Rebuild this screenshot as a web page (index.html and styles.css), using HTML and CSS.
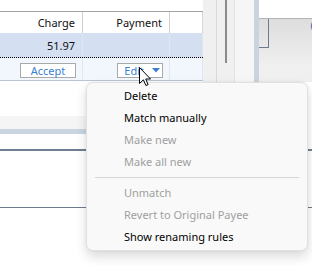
FILE: index.html
```html
<!DOCTYPE html>
<html lang="en">
<head>
    <meta charset="UTF-8">
    <meta name="viewport" content="width=device-width, initial-scale=1.0">
    <title>Register - match menu</title>
    <link rel="stylesheet" href="styles.css">
</head>
<body>
    <div class="screen">
        <div class="top">
            <div class="register">
                <div class="spacer"></div>
                <div class="grid head">
                    <div class="cell">Charge</div>
                    <div class="cell">Payment</div>
                    <div class="cell"></div>
                </div>
                <div class="grid row selected">
                    <div class="cell">51.97</div>
                    <div class="cell"></div>
                    <div class="cell"></div>
                </div>
                <div class="grid row actions">
                    <div class="cell"><span class="btn">Accept</span></div>
                    <div class="cell">
                        <span class="btn edit">Edit
                            <svg class="caret" width="8" height="5" viewBox="0 0 8 5"><path d="M0 0H8L4 4.5Z" fill="#3b7fd2"/></svg>
                        </span>
                    </div>
                    <div class="cell"></div>
                </div>
            </div>
            <div class="strip s1"></div>
            <div class="strip s2"><div class="grip"></div></div>
            <div class="strip s3"></div>
            <div class="splitter"></div>
            <div class="pane">
                <div class="pane-head"></div>
                <div class="pane-body">
                    <div class="corner"></div>
                    <span class="glyph">C</span>
                </div>
            </div>
        </div>

        <div class="bottom">
            <div class="band"></div>
            <div class="band-edge"></div>
            <div class="rule thick"></div>
            <div class="rule thin"></div>
        </div>

        <!-- context menu for the downloaded transaction -->
        <ul class="menu">
            <li>Delete</li>
            <li>Match manually</li>
            <li class="off">Make new</li>
            <li class="off">Make all new</li>
            <li class="sep"></li>
            <li class="off">Unmatch</li>
            <li class="off">Revert to Original Payee</li>
            <li>Show renaming rules</li>
        </ul>

        <svg class="cursor" width="12" height="19" viewBox="0 0 12 19">
            <path d="M0.5 0.5V16.5L4.4 12.8L6.9 18.5L9.1 17.6L6.7 12H11.5Z" fill="#fff" stroke="#000" stroke-width="1" stroke-linejoin="miter"/>
        </svg>
    </div>
</body>
</html>
```

FILE: styles.css
```css
body {
    margin: 0;
    background: #fff;
    font-family: "Noto Sans", "Open Sans", sans-serif;
    font-size: 11px;
    color: #111;
}
.screen {
    position: relative;
    width: 312px;
    height: 266px;
    overflow: hidden;
}

/* upper part: register grid + side panels */
.top {
    display: flex;
    height: 82px;
}
.register {
    width: 203px;
    flex: none;
}
.spacer { height: 11px; }
.grid {
    display: grid;
    grid-template-columns: 83px 87px 33px;
}
.cell {
    border-right: 1px solid #e2e7ee;
    display: flex;
    align-items: center;
    justify-content: flex-end;
    padding-right: 7px;
}
.head {
    height: 21px;
    border-top: 1px solid #a3a3a3;
}
.head .cell { border-right-color: #cfcfcf; padding-right: 7px; }
.head .cell:last-child { border-right-color: #d6d6d6; }
.selected {
    height: 24px;
    background: #d4e0f2;
    border-bottom: 1px dotted #000;
}
.actions {
    height: 22px;
    background: #f1f7fd;
    border-bottom: 1px solid #b9c5d3;
}
.actions .cell {
    align-items: flex-start;
    padding-top: 5px;
    padding-right: 6px;
}
.btn {
    display: flex;
    align-items: center;
    justify-content: center;
    box-sizing: border-box;
    width: 56px;
    height: 15px;
    border: 1px solid #a9a9a9;
    background: #fff;
    color: #3b7fd2;
    line-height: 13px;
}
.btn.edit {
    width: 46px;
    justify-content: flex-end;
    padding-right: 2px;
}
.caret { margin-left: 8px; }

.strip { flex: none; background: #f0f0f0; }
.s1 { width: 13px; border-right: 1px solid #dadada; }
.s2 { width: 17px; border-right: 1px solid #e2e2e2; }
.grip {
    width: 2px;
    height: 63px;
    margin-left: 8px;
    background: #8b8b8b;
}
.s3 { width: 19px; background: #f6f6f6; }
.splitter { width: 5px; flex: none; background: #c9d4df; }
.pane { flex: 1; display: flex; flex-direction: column; overflow: hidden; }
.pane-head {
    height: 18px;
    background: #fff;
    border-bottom: 1px solid #b4b4b4;
}
.pane-body {
    flex: 1;
    display: flex;
    align-items: flex-start;
    background: linear-gradient(#dddddd, #f0f0f0 48px, #efefef);
}
.corner {
    width: 9px;
    height: 28px;
    border-right: 1px solid #6b7b8d;
    border-bottom: 1px solid #6b7b8d;
}
.glyph {
    margin-left: auto;
    margin-right: -8px;
    margin-top: -4px;
    font-size: 16px;
    color: #1e6fc6;
}

/* lower part */
.bottom { padding-top: 34px; }
.band { width: 203px; height: 13px; background: #f5f5f5; }
.band-edge { width: 203px; height: 5px; background: #c9d5e0; }
.rule.thick { margin-top: 15px; height: 2px; background: #6f7f92; }
.rule.thin { margin-top: 56px; height: 1px; background: #6c7b8c; }

/* context menu */
.menu {
    position: absolute;
    left: 86px;
    top: 82px;
    width: 222px;
    box-sizing: border-box;
    margin: 0;
    padding: 2px 0;
    list-style: none;
    background: #f9f9f9;
    border: 1px solid #e1e1e1;
    border-radius: 7px;
    box-shadow: 0 6px 12px rgba(0,0,0,0.14), 0 0 3px rgba(0,0,0,0.06);
    font-size: 11px;
}
.menu li {
    height: 22px;
    line-height: 22px;
    padding-left: 37px;
    color: #000;
}
.menu li.off { color: #a0a0a0; }
.menu li.sep {
    height: 1px;
    margin: 4px 8px;
    padding: 0;
    background: #d6d6d6;
}

.cursor {
    position: absolute;
    left: 139px;
    top: 67px;
}
```
